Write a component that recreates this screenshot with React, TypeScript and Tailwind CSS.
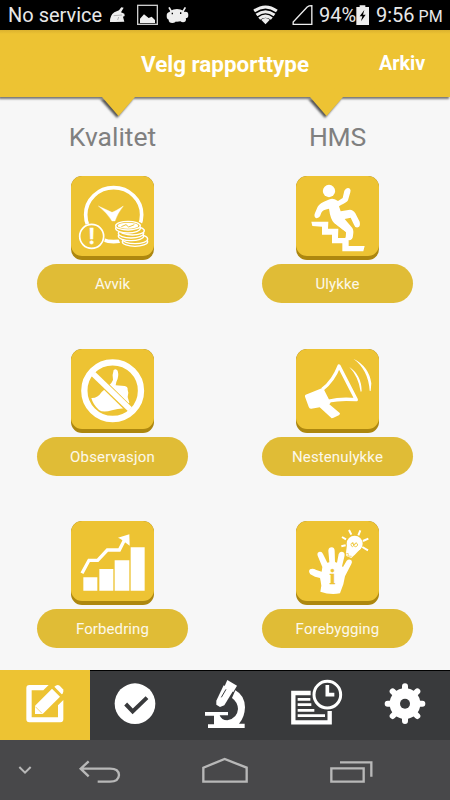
import React from "react";

const Y = "#edc333";

function ClockCoins() {
  return (
    <svg viewBox="32 18 252 252" className="h-[84px] w-[84px]" fill="none" stroke="#fff">
      <ellipse cx="160" cy="134" rx="84" ry="81" strokeWidth="11" />
      <path d="M114 108L155 127Q165 124 189 108Q171 131 164 153L155 153Q140 128 114 108Z" fill="#fff" stroke="#fff" strokeWidth="1" />
      <circle cx="94" cy="200" r="39" fill={Y} stroke={Y} strokeWidth="3" />
      <circle cx="94" cy="199" r="36" fill={Y} strokeWidth="5" />
      <text x="94" y="221" textAnchor="middle" fill="#fff" fontSize="64" fontFamily="Roboto, sans-serif" fontWeight="700">!</text>
      <g fill={Y} strokeWidth="4">
        <path d="M164 164Q172 150 210 152Q250 155 252 178L264 205Q266 230 225 234Q192 234 181 218L170 190Z" stroke={Y} strokeWidth="4" />
        <ellipse cx="224" cy="215" rx="38" ry="14" />
        <ellipse cx="224" cy="207" rx="38" ry="14" />
        <ellipse cx="212" cy="198" rx="38" ry="14" />
        <ellipse cx="212" cy="190" rx="38" ry="14" />
        <ellipse cx="216" cy="182" rx="36" ry="13" />
        <ellipse cx="203" cy="175" rx="37" ry="14" />
        <ellipse cx="203" cy="167" rx="37" ry="13" />
      </g>
      <ellipse cx="203" cy="167" rx="31" ry="9" fill="#fff" stroke="none" />
      <path d="M183 170L197 164L205 171L222 164" stroke={Y} strokeWidth="3" />
    </svg>
  );
}

function Stairs() {
  return (
    <svg viewBox="32 18 252 252" className="h-[84px] w-[84px]" fill="#fff">
      <path d="M78 155L129 155L128 176L159 176L158 204L190 204L190 228L238 228L234 244L171 244L171 220L140 220L140 194L110 194L110 170L81 168Z" />
      <path d="M126 91Q138 83 148 88L158 93L172 84L177 62Q183 51 192 55Q198 59 195 67L188 91Q184 98 167 105L161 109L166 124L189 120Q202 117 210 130L223 155Q226 169 218 172Q209 174 206 164L196 143L178 147L201 174Q206 182 203 197Q202 210 191 211Q180 209 180 201L182 187L147 160Q135 148 131 116Q111 119 108 128L104 139Q99 146 91 144Q85 139 89 129L97 110Q103 100 126 91Z" />
      <path d="M131 152L147 163L180 188L179 201" fill="none" stroke={Y} strokeWidth="3" />
      <circle cx="131" cy="63" r="18.5" />
    </svg>
  );
}

function NoThumb() {
  return (
    <svg viewBox="32 26 252 252" className="h-[84px] w-[84px]" fill="#fff">
      <path d="M93 173Q112 174 124 155Q138 144 153 128L158 119Q155 102 160 89Q167 83 172 91Q177 108 168 125L166 135L193 137Q203 139 202 148L204 157L202 170L207 187L193 204Q170 205 155 210Q128 218 116 209Q98 193 93 173Z" />
      <path d="M100 102L207 207" stroke={Y} strokeWidth="23" />
      <path d="M99 101L209 207" stroke="#fff" strokeWidth="17" />
      <circle cx="157" cy="151" r="85" fill="none" stroke="#fff" strokeWidth="19" />
    </svg>
  );
}

function Megaphone() {
  return (
    <svg viewBox="32 26 252 252" className="h-[84px] w-[84px]" fill="#fff">
      <path d="M111 147Q144 122 161 77L213 178Q165 174 131 182" fill="none" stroke="#fff" strokeWidth="10" strokeLinejoin="round" />
      <path d="M61 163L113 142L136 187L132 192L164 219L162 224L143 233L139 234L103 201L78 205Q72 206 70 199L59 169Q58 165 61 163Z" strokeLinejoin="round" />
      <path d="M192 80Q229 105 229 153L226 154Q219 108 192 80Z" />
      <path d="M204 55Q251 78 258 129L256 152L253 151Q249 88 204 55Z" />
    </svg>
  );
}

function Growth() {
  return (
    <svg viewBox="32 26 252 252" className="h-[84px] w-[84px]" fill="#fff">
      <path d="M69 195H111V235H69ZM117 170H159V235H117ZM163 144H207V235H163ZM211 105H253V235H211Z" />
      <path d="M65 183L86 144H112L141 113H177L192 84" fill="none" stroke="#fff" strokeWidth="10" />
      <path d="M173 76L207 66L208 100L194 90L181 80Z" />
    </svg>
  );
}

function HandIdea() {
  return (
    <svg viewBox="32 26 252 252" className="h-[84px] w-[84px]" fill="#fff">
      <path d="M106 207L104 197L89 193L75 186Q68 177 74 171Q82 167 93 173L109 178L111 164L97 130Q94 120 103 118Q110 117 113 125L126 151L132 150L129 115Q130 105 139 105Q148 106 148 116L149 149L155 151L160 125Q164 116 173 119Q180 123 177 133L170 162L173 164L184 145Q191 138 198 144Q202 149 198 155L179 192L174 216L164 243Q135 249 105 238L108 220Z" />
      <circle cx="208" cy="94" r="24" />
      <path d="M185 97L182 120L183 131L198 137L210 126L227 108Z" />
      <path d="M183 123L189 124L188 131L199 132" fill="none" stroke={Y} strokeWidth="2" />
      <path d="M191 53L198 67M225 54L219 69M170 74L182 81M233 86L249 79M231 104L248 114M168 102L181 99" stroke="#fff" strokeWidth="6" />
      <path d="M207 98Q198 87 197 97Q200 109 207 97Q216 89 217 98Q212 108 205 99L202 89M213 90L207 96" fill="none" stroke={Y} strokeWidth="2.5" />
      <text x="141" y="214" textAnchor="middle" fill={Y} stroke={Y} strokeWidth="1" fontSize="62" fontFamily="Liberation Serif, serif" fontWeight="700">i</text>
    </svg>
  );
}

function Item({ label, icon, spacing }: { label: string; icon: React.ReactNode; spacing: string }) {
  return (
    <div className="flex h-[172.5px] w-[225px] flex-col items-center">
      <div className="h-[84px] w-[83px] overflow-hidden rounded-[11px] bg-[#ad870f]">
        <div className="h-[80px] w-[83px] rounded-[11px] bg-[#edc333]">{icon}</div>
      </div>
      <div className={"mt-1 flex h-[39px] w-[151px] items-center justify-center rounded-full bg-[#e0bc36] pt-[2px] text-[15px] leading-none text-white/90 " + spacing}>
        {label}
      </div>
    </div>
  );
}

function StatusBar() {
  return (
    <div className="flex h-[30px] items-center bg-black text-[#e8e8e8]">
      <span className="ml-2 w-[97px] whitespace-nowrap text-[20px] leading-[30px]">No service</span>
      <svg viewBox="315 0 270 90" className="h-[30px] w-[90px]" fill="#eee">
        <path d="M330 66Q329 47 343 37L357 31L364 22L371 23L363 37L373 41L374 48L369 50L373 65L345 66Z" />
        <path d="M341 47L366 45M356 51L353 60" stroke="#777" strokeWidth="1.5" />
        <rect x="413" y="16" width="59" height="57" fill="none" stroke="#ccc" strokeWidth="4" />
        <path d="M420 69V56L432 43L446 54L455 50L465 60V69Z" />
        <ellipse cx="531" cy="46" rx="27" ry="19" />
        <path d="M508 24L514 34M555 24L549 34" stroke="#eee" strokeWidth="5" strokeLinecap="round" />
        <ellipse cx="508" cy="48" rx="8" ry="11" />
        <ellipse cx="557" cy="45" rx="8" ry="10" />
        <ellipse cx="517" cy="60" rx="11" ry="9" />
        <ellipse cx="549" cy="58" rx="9" ry="9" />
        <path d="M517 38V43M542 37V42" stroke="#000" strokeWidth="4" />
      </svg>
      <svg viewBox="80 0 185 90" className="ml-[57px] h-[30px] w-[62px]" fill="none" stroke="#eee">
        <path d="M86 33Q120 9 154 33M93 45Q120 25 147 45M101 56Q120 41 139 56" strokeWidth="9" />
        <path d="M107 59Q120 49 133 59L120 73Z" fill="#eee" stroke="none" />
        <path d="M259 17V73H203V66L245 21Q250 17 259 17Z" strokeWidth="4" />
      </svg>
      <span className="ml-[5px] w-[37px] whitespace-nowrap text-[20px] leading-[30px]">94%</span>
      <svg viewBox="396 0 42 90" className="h-[30px] w-[14px]">
        <path d="M397 21H407V16H424V21H435V75H397Z" fill="#eee" />
        <path d="M421 30L407 49H415L411 64L425 44H417Z" fill="#000" />
      </svg>
      <span className="ml-[6px] whitespace-nowrap text-[20px] leading-[30px]">9:56</span>
      <span className="ml-[4px] pt-[3px] text-[16px] leading-[27px]">PM</span>
    </div>
  );
}

function Pointer() {
  return (
    <svg viewBox="0 0 44 26" className="h-[26px] w-[44px]">
      <defs>
        <filter id="soft" x="-20%" y="-20%" width="140%" height="140%">
          <feGaussianBlur stdDeviation="1.1" />
        </filter>
      </defs>
      <path d="M3 2L20 21L36 2Z" fill="#555" filter="url(#soft)" />
      <path d="M5 0H38L21.5 19Z" fill={Y} />
    </svg>
  );
}

function NavIcon({ x, children }: { x: number; children: React.ReactNode }) {
  return (
    <svg viewBox={`${x} 30 270 210`} className="h-[70px] w-[90px]" fill="#fff">
      {children}
    </svg>
  );
}

export default function App() {
  return (
    <div className="flex h-[800px] w-[450px] flex-col overflow-hidden bg-[#f7f7f7] font-[Roboto,sans-serif]">
      <StatusBar />
      <header className="relative z-10 flex h-[67px] items-center bg-[#edc333] bg-linear-to-b from-[#dbb22f] to-[#edc333] to-[4px] text-white shadow-[-1px_2px_2px_#777]">
        <h1 className="ml-[141px] w-[238px] whitespace-nowrap pt-px text-[22.4px] leading-[66px] font-bold">Velg rapporttype</h1>
        <span className="text-[19.8px] leading-[64px] font-bold">Arkiv</span>
        <div className="absolute top-[67px] left-[97px]"><Pointer /></div>
        <div className="absolute top-[67px] left-[305px]"><Pointer /></div>
      </header>
      <main className="h-[573px]">
        <div className="flex h-[79px] pt-[24px] text-[26.5px] leading-[32px] text-[#808080]">
          <h2 className="w-[225px] text-center">Kvalitet</h2>
          <h2 className="w-[225px] text-center tracking-[-0.2px]">HMS</h2>
        </div>
        <div className="grid grid-cols-2">
          <Item label="Avvik" icon={<ClockCoins />} spacing="" />
          <Item label="Ulykke" icon={<Stairs />} spacing="tracking-[0.1px]" />
          <Item label="Observasjon" icon={<NoThumb />} spacing="tracking-[0.15px]" />
          <Item label="Nestenulykke" icon={<Megaphone />} spacing="tracking-[0.12px]" />
          <Item label="Forbedring" icon={<Growth />} spacing="tracking-[0.1px]" />
          <Item label="Forebygging" icon={<HandIdea />} spacing="tracking-[0.15px]" />
        </div>
      </main>
      <nav className="flex h-[70px] bg-[#393a3c]">
        <div className="bg-[#edc333]">
          <NavIcon x={0}>
            <path d="M88 75H146L130 91H95V172H174V136L190 120V178Q190 187 181 187H88Q79 187 79 178V84Q79 75 88 75Z" />
            <path d="M105 137L156 86L180 110L128 162H105Z" />
            <path d="M163 80L167 77Q173 73 179 77L189 88Q193 95 188 101L185 103Z" />
            <path d="M106 140L126 160" stroke={Y} strokeWidth="2" />
          </NavIcon>
        </div>
        <div className="flex border-t border-black">
          <div className="-mt-px"><NavIcon x={270}>
            <circle cx="405" cy="131" r="61" />
            <path d="M377 132L398 154L441 113" fill="none" stroke="#393a3c" strokeWidth="12" />
          </NavIcon></div>
          <div className="-mt-px"><NavIcon x={540}>
            <path d="M682 60L711 77L700 96L673 80Z" />
            <path d="M671 76L699 93L673 136L660 141L649 134V122Z" />
            <path d="M678 88L664 112" stroke="#393a3c" strokeWidth="3" />
            <path d="M706 91Q734 106 735 142Q734 173 717 191H734V204H624V193H642V167H615V156H684V166H659Q664 181 682 181Q712 175 714 147Q713 126 696 114Z" />
          </NavIcon></div>
          <div className="-mt-px"><NavIcon x={810}>
            <path d="M932 99H880V187H989V153" fill="none" stroke="#fff" strokeWidth="13" />
            <path d="M893 118H931M893 134H934M893 151H943M893 167H975" stroke="#fff" strokeWidth="8" />
            <circle cx="982" cy="104" r="45" fill="#393a3c" />
            <circle cx="982" cy="104" r="40" fill="#393a3c" stroke="#fff" strokeWidth="9" />
            <path d="M982 75V104H1003" fill="none" stroke="#fff" strokeWidth="11" />
          </NavIcon></div>
          <div className="-mt-px"><NavIcon x={1080}>
            <circle cx="1215" cy="131" r="46" />
            <path d="M1215 79V183M1163 131H1267M1178 94L1252 168M1252 94L1178 168" stroke="#fff" strokeWidth="18" strokeLinecap="round" />
            <circle cx="1215" cy="131" r="15" fill="#393a3c" />
          </NavIcon></div>
        </div>
      </nav>
      <footer className="h-[60px] bg-[#48484a]">
        <svg viewBox="0 240 1350 180" className="h-[60px] w-[450px]" fill="none" stroke="#b8b8b8" strokeWidth="7">
          <path d="M58 321L75 338L92 321" strokeWidth="6" />
          <path d="M266 304L242 326L266 349M242 326H330Q356 326 357 345Q356 365 330 365H293" />
          <path d="M610 365V323L674 297L740 323V365Z" />
          <path d="M994 325H1091V365H994ZM1020 307H1114V350" />
        </svg>
      </footer>
    </div>
  );
}
